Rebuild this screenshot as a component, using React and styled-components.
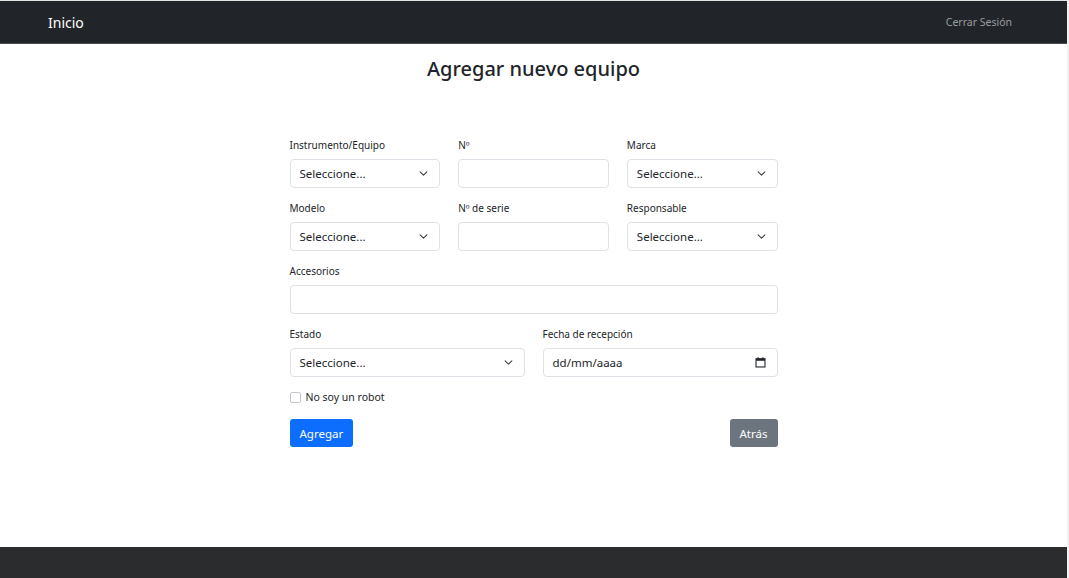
import React from "react";
import styled, { createGlobalStyle } from "styled-components";

const GlobalStyle = createGlobalStyle`
  * { box-sizing: border-box; }
  html, body { margin: 0; padding: 0; }
  body {
    background: #f1f1f1;
    font-family: "Noto Sans", "Open Sans", sans-serif;
    color: #212529;
  }
`;

const Page = styled.div`
  display: flex;
  flex-direction: column;
  height: 578px;
  margin-right: 2px;
  border-top: 1px solid #e4e4e4;
  background: #fff;
`;

const Navbar = styled.nav`
  display: flex;
  align-items: center;
  justify-content: space-between;
  height: 43px;
  padding: 0 55px 0 48px;
  background: #212529;
  border-bottom: 1px solid #4a4c50;
`;

const Brand = styled.a`
  color: #fff;
  font-size: 14px;
  text-decoration: none;
`;

const NavLink = styled.a`
  color: #9a9c9f;
  font-size: 10.5px;
  text-decoration: none;
`;

const Main = styled.main`
  flex: 1;
  display: flex;
  flex-direction: column;
  align-items: center;
`;

const Title = styled.h1`
  margin: 12px 0 55px;
  font-size: 20px;
  line-height: 26px;
  font-weight: 500;
  color: #212529;
`;

const Form = styled.form`
  width: 488px;
  display: grid;
  grid-template-columns: repeat(6, 1fr);
  column-gap: 18px;
  row-gap: 12px;
`;

const Field = styled.div`
  display: flex;
  flex-direction: column;
  grid-column: span ${(p) => p.$span || 2};
`;

const Label = styled.label`
  font-size: 10px;
  line-height: 16px;
  margin-bottom: 6px;
  color: #212529;
`;

const Box = styled.div`
  display: flex;
  align-items: center;
  justify-content: space-between;
  height: 29px;
  padding: 0 11px 0 9px;
  border: 1px solid #dee2e6;
  border-radius: 4px;
  background: #fff;
  font-size: 11.5px;
  color: #212529;
`;

const Check = styled.div`
  grid-column: span 6;
  display: flex;
  align-items: center;
  gap: 5px;
  height: 16px;
  font-size: 10.5px;
  color: #212529;
`;

const CheckBox = styled.span`
  width: 11px;
  height: 11px;
  border: 1px solid #c4c8cc;
  border-radius: 2px;
  background: #fff;
`;

const Actions = styled.div`
  grid-column: span 6;
  display: flex;
  justify-content: space-between;
  margin-top: 2px;
`;

const Button = styled.button`
  height: 28px;
  padding: 0 10px;
  border: none;
  border-radius: 3px;
  font-family: inherit;
  font-size: 11.5px;
  color: #fff;
  background: ${(p) => (p.$variant === "secondary" ? "#6c757d" : "#0d6efd")};
`;

const Footer = styled.footer`
  height: 31px;
  background: #2b2c2e;
`;

const Chevron = () => (
  <svg width="9" height="9" viewBox="0 0 16 16" fill="none">
    <path d="M2 5l6 6 6-6" stroke="#343a40" strokeWidth="1.8" strokeLinecap="round" strokeLinejoin="round" />
  </svg>
);

const Calendar = () => (
  <svg width="11" height="11" viewBox="0 0 16 16" fill="none">
    <rect x="1.5" y="2.5" width="13" height="12" stroke="#212529" strokeWidth="1.6" />
    <rect x="1.5" y="2.5" width="13" height="3" fill="#212529" />
    <path d="M4.5 0.5v3M11.5 0.5v3" stroke="#212529" strokeWidth="1.6" />
  </svg>
);

const Select = () => (
  <Box>
    Seleccione...
    <Chevron />
  </Box>
);

export default function App() {
  return (
    <>
      <GlobalStyle />
      <Page>
        <Navbar>
          <Brand>Inicio</Brand>
          <NavLink>Cerrar Sesión</NavLink>
        </Navbar>
        <Main>
          <Title>Agregar nuevo equipo</Title>
          <Form>
            <Field>
              <Label>Instrumento/Equipo</Label>
              <Select />
            </Field>
            <Field>
              <Label>Nº</Label>
              <Box />
            </Field>
            <Field>
              <Label>Marca</Label>
              <Select />
            </Field>
            <Field>
              <Label>Modelo</Label>
              <Select />
            </Field>
            <Field>
              <Label>Nº de serie</Label>
              <Box />
            </Field>
            <Field>
              <Label>Responsable</Label>
              <Select />
            </Field>
            <Field $span={6}>
              <Label>Accesorios</Label>
              <Box />
            </Field>
            <Field $span={3}>
              <Label>Estado</Label>
              <Select />
            </Field>
            <Field $span={3}>
              <Label>Fecha de recepción</Label>
              <Box>
                dd/mm/aaaa
                <Calendar />
              </Box>
            </Field>
            <Check>
              <CheckBox />
              No soy un robot
            </Check>
            <Actions>
              <Button type="button">Agregar</Button>
              <Button type="button" $variant="secondary">Atrás</Button>
            </Actions>
          </Form>
        </Main>
        <Footer />
      </Page>
    </>
  );
}
